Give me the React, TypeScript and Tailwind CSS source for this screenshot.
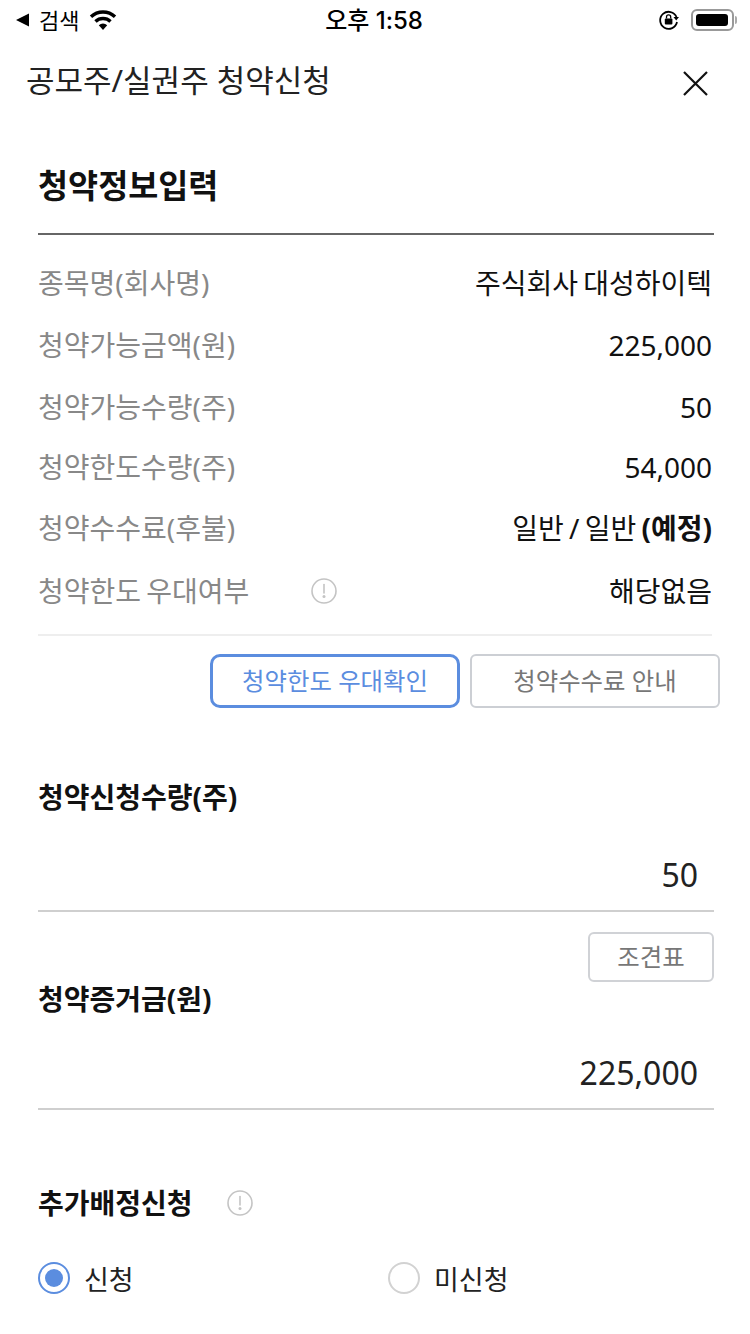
import React from "react";

const font = { fontFamily: '"Noto Sans", "Noto Sans CJK KR", sans-serif' };

const InfoRows = [
    { label: "종목명(회사명)", value: "주식회사 대성하이텍", h: "h-[62px]" },
    { label: "청약가능금액(원)", value: "225,000", h: "h-[62px]" },
    { label: "청약가능수량(주)", value: "50", h: "h-[60px]" },
    { label: "청약한도수량(주)", value: "54,000", h: "h-[61px]" },
    { label: "청약수수료(후불)", value: "일반 / 일반", bold: "(예정)", h: "h-[63px]" },
    { label: "청약한도 우대여부", value: "해당없음", info: true, h: "h-[40px]" },
];

const InfoIcon = () => (
    <svg width="26" height="26" viewBox="0 0 26 26" fill="none">
        <circle cx="13" cy="13" r="12" stroke="#c4c4c4" strokeWidth="1.6" />
        <path d="M13 6.5V15" stroke="#c4c4c4" strokeWidth="1.6" strokeLinecap="round" />
        <circle cx="13" cy="18.5" r="1.5" fill="#c4c4c4" />
    </svg>
);

const StatusBar = () => (
    <div className="flex h-10 items-center justify-between pl-[15px] pr-[13px] text-black">
        <div className="flex w-[200px] items-center">
            <svg width="14" height="14" viewBox="0 0 14 14">
                <path d="M1 7L14 0.5V13.5Z" fill="#000" />
            </svg>
            <span className="ml-[10px] text-[22px] leading-none">검색</span>
            <svg className="ml-[9px]" width="30" height="22" viewBox="0 0 30 22">
                <path d="M15 21L10.8 16.2A6.2 6.2 0 0 1 19.2 16.2Z" fill="#000" />
                <path d="M7.5 12.5A11 11 0 0 1 22.5 12.5" stroke="#000" strokeWidth="3.4" fill="none" />
                <path d="M3 7.7A17.5 17.5 0 0 1 27 7.7" stroke="#000" strokeWidth="3.4" fill="none" />
            </svg>
        </div>
        <span className="mr-[4px] mt-[2px] font-['Inter','Noto_Sans_CJK_KR',sans-serif] text-[24px] font-medium leading-none">오후 1:58</span>
        <div className="flex w-[200px] items-center justify-end gap-[11px]">
            <svg width="22" height="22" viewBox="0 0 22 22" fill="none">
                <path d="M18.5 8A8.5 8.5 0 1 0 19 13" stroke="#000" strokeWidth="1.8" />
                <path d="M15.5 8H21L18.2 11.5Z" fill="#000" />
                <rect x="6.8" y="9.5" width="7.6" height="6" rx="1" fill="#000" />
                <path d="M8.5 9.5V8a2.1 2.1 0 0 1 4.2 0v1.5" stroke="#000" strokeWidth="1.3" />
            </svg>
            <div className="flex items-center">
                <div className="h-[22px] w-[43px] rounded-[6px] border-2 border-[#999] p-[3px]">
                    <div className="h-full w-[32px] rounded-[3px] bg-black" />
                </div>
                <div className="ml-[1px] h-[8px] w-[2px] rounded-r-full bg-[#aaa]" />
            </div>
        </div>
    </div>
);

export default function App() {
    return (
        <div className="h-[1334px] w-[750px] overflow-hidden bg-white" style={font}>
            <StatusBar />

            <div className="flex h-[84px] items-start justify-between pl-[26px] pr-[41px] pt-[19px]">
                <h1 className="text-[31px] leading-[42px] text-[#222]">공모주/실권주 청약신청</h1>
                <svg className="mt-[10px]" width="28" height="28" viewBox="0 0 28 28">
                    <path d="M3 3L26 26M26 3L3 26" stroke="#111" strokeWidth="2.2" />
                </svg>
            </div>

            <div className="pl-[38px] pr-[36px]">
                <h2 className="flex h-[109px] items-start pt-[38px] text-[32.7px] font-bold leading-[48px] text-[#111]">
                    청약정보입력
                </h2>
                <div className="h-[2px] bg-[#666]" />

                <div className="mr-[2px] border-b-2 border-[#eeeeee] pb-[23px] pt-[28px] [word-spacing:-2px]">
                    {InfoRows.map((row, index) => (
                        <div key={index} className={`flex items-start justify-between ${row.h}`}>
                            <div className="flex items-center">
                                <span className="w-[273px] text-[28px] leading-[40px] text-[#888]">{row.label}</span>
                                {row.info && <InfoIcon />}
                            </div>
                            <span className="text-[28px] leading-[40px] text-[#111]">
                                {row.value} {row.bold && <b className="font-bold">{row.bold}</b>}
                            </span>
                        </div>
                    ))}
                </div>

                <div className="-mr-[6px] mt-[18px] flex justify-end gap-[10px]">
                    <button className="h-[54px] w-[250px] rounded-[10px] border-[3px] border-[#5b8ddf] text-[24.4px] text-[#5b8ddf]">
                        청약한도 우대확인
                    </button>
                    <button className="h-[54px] w-[250px] rounded-[6px] border-2 border-[#cccfd4] text-[24.4px] text-[#777]">
                        청약수수료 안내
                    </button>
                </div>

                <h3 className="mt-[68px] text-[28px] font-bold leading-[42px] text-[#111]">청약신청수량(주)</h3>
                <div className="mt-[36px] h-[58px] border-b-2 border-[#cfcfcf] pr-[16px] text-right text-[32px] leading-[42px] text-[#222]">
                    50
                </div>

                <div className="mt-[20px] flex justify-end">
                    <button className="h-[50px] w-[126px] rounded-[6px] border-2 border-[#d0d2d6] text-[24.4px] text-[#777]">
                        조견표
                    </button>
                </div>

                <h3 className="-mt-[4px] text-[28px] font-bold leading-[42px] text-[#111]">청약증거금(원)</h3>
                <div className="mt-[30px] h-[60px] border-b-2 border-[#cfcfcf] pr-[16px] text-right text-[32px] leading-[46px] text-[#222]">
                    225,000
                </div>

                <div className="mt-[72px] flex items-center">
                    <h3 className="w-[189px] text-[28px] font-bold leading-[42px] text-[#111]">추가배정신청</h3>
                    <InfoIcon />
                </div>

                <div className="mt-[34px] flex items-center">
                    <div className="flex w-[350px] items-center gap-[14px]">
                        <div className="mb-[2px] flex h-[32px] w-[32px] items-center justify-center rounded-full border-2 border-[#5b8ddf]">
                            <div className="h-[18px] w-[18px] rounded-full bg-[#5b8ddf]" />
                        </div>
                        <span className="pt-[2px] text-[27px] leading-[40px] text-[#222]">신청</span>
                    </div>
                    <div className="flex items-center gap-[14px]">
                        <div className="mb-[2px] h-[32px] w-[32px] rounded-full border-2 border-[#d2d2d2]" />
                        <span className="pt-[2px] text-[27px] leading-[40px] text-[#222]">미신청</span>
                    </div>
                </div>
            </div>
        </div>
    );
}
